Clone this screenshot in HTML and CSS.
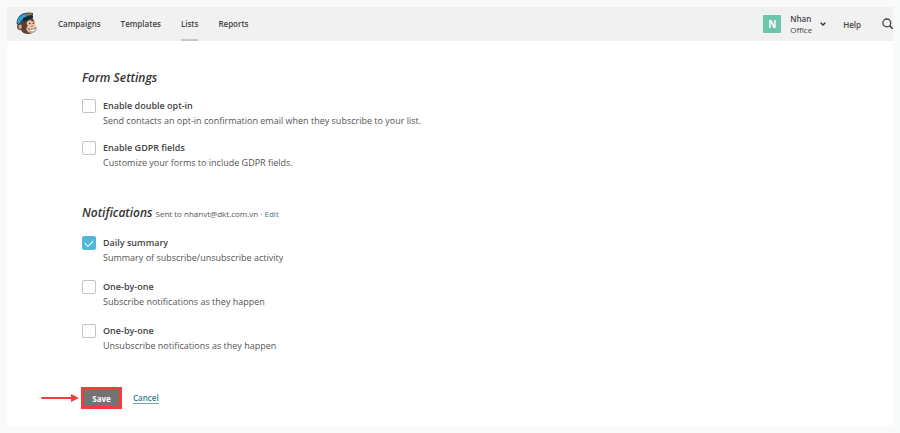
FILE: index.html
```html
<!DOCTYPE html>
<html lang="en">
<head>
<meta charset="utf-8">
<meta name="viewport" content="width=device-width, initial-scale=1">
<title>Form Settings</title>
<link rel="stylesheet" href="styles.css">
</head>
<body>
<div class="page">
  <header class="topbar">
    <a class="logo" href="#" aria-label="Home">
      <svg viewBox="0 0 22 24" width="22" height="24" aria-hidden="true">
        <path d="M4 11C5 7 10 4 15 5C18 7 19 10 19 14C20 19 17 22 12 22C7 22 5 19 4.500 16Z" fill="#5b4038"/>
        <ellipse cx="4" cy="14.500" rx="2.900" ry="3.500" fill="#5b4038"/>
        <ellipse cx="4.100" cy="14.700" rx="1.700" ry="2.300" fill="#d9a584"/>
        <path d="M11 10C13 7.500 15 8 16 9.500C18 8.500 19 10 18.800 12C20.500 15 21.500 17 19.500 19.500C17 22 12 21.500 10.500 18C9.800 16 11.500 14.500 12 13.500C10.600 12.500 10.400 11 11 10Z" fill="#ecc3a3"/>
        <path d="M12 16.500C14.500 18 18 17.600 20 15.500C20 18.500 18.500 20 16 20C14 20 12.500 18.500 12 16.500Z" fill="#fff" stroke="#684437" stroke-width=".6"/>
        <circle cx="13.700" cy="11.500" r=".8" fill="#3a2925"/>
        <circle cx="17.200" cy="11.300" r=".7" fill="#3a2925"/>
        <path d="M15 14h2" stroke="#684437" stroke-width=".7"/>
        <path d="M.8 12C0 7.500 3.500 2.500 8 1.300C11 .2 14.500 .3 17 1L16.500 6C11 5.500 6 7.500 3 13Z" fill="#263846"/>
        <path d="M1.200 10.500C1.500 6 5 2.800 9 1.800L12 4C8 5.500 5.500 8 3 12Z" fill="#27a3d5"/>
        <path d="M9.500 1.500C12 .7 14 .8 16 1.300L15.500 3L11 4Z" fill="#85734f"/>
        <path d="M7 6.500C10 4 14 3.300 17 4.200L17 6C14 6.500 11 8 9 9.500C7.500 9.500 6.500 8.500 7 6.500Z" fill="#1d2731"/>
      </svg>
    </a>
    <nav class="menu" aria-label="Main">
      <a href="#">Campaigns</a>
      <a href="#">Templates</a>
      <a href="#" class="active" aria-current="page">Lists</a>
      <a href="#">Reports</a>
    </nav>
    <div class="tools">
      <button class="account" type="button">
        <span class="avatar">N</span>
        <span class="who"><span class="name">Nhan</span><span>Office</span></span>
        <svg class="chevron" viewBox="0 0 6 4" width="6" height="4" aria-hidden="true"><path d="M.7 .7L3 3L5.300 .7" fill="none" stroke="#333" stroke-width="1.400"/></svg>
      </button>
      <a class="help" href="#">Help</a>
      <button class="search" type="button" aria-label="Search">
        <svg viewBox="0 0 11 12" width="11" height="12" aria-hidden="true"><circle cx="4.800" cy="4.900" r="3.900" fill="none" stroke="#444" stroke-width="1.300"/><path d="M7.500 7.600L10.600 10.800" stroke="#444" stroke-width="1.600"/></svg>
      </button>
    </div>
  </header>
  <main>
    <form class="settings">
      <section>
        <h2>Form Settings</h2>
        <div class="options compact">
          <div class="option">
            <input type="checkbox" id="optin">
            <div><label for="optin">Enable double opt-in</label><p>Send contacts an opt-in confirmation email when they subscribe to your list.</p></div>
          </div>
          <div class="option">
            <input type="checkbox" id="gdpr">
            <div><label for="gdpr">Enable GDPR fields</label><p>Customize your forms to include GDPR fields.</p></div>
          </div>
        </div>
      </section>
      <section>
        <div class="heading"><h2>Notifications</h2><span class="sent">Sent to nhanvt@dkt.com.vn · <a href="#">Edit</a></span></div>
        <div class="options">
          <div class="option">
            <input type="checkbox" id="daily" checked>
            <div><label for="daily">Daily summary</label><p>Summary of subscribe/unsubscribe activity</p></div>
          </div>
          <div class="option">
            <input type="checkbox" id="sub">
            <div><label for="sub">One-by-one</label><p>Subscribe notifications as they happen</p></div>
          </div>
          <div class="option">
            <input type="checkbox" id="unsub">
            <div><label for="unsub">One-by-one</label><p>Unsubscribe notifications as they happen</p></div>
          </div>
        </div>
      </section>
      <div class="actions">
        <svg class="pointer" viewBox="0 0 38 8" width="38" height="8" aria-hidden="true"><path d="M1 4H32" stroke="#f53b3b" stroke-width="2" stroke-linecap="round"/><path d="M30 0L38 4L30 8Z" fill="#f53b3b"/></svg>
        <button class="save" type="button">Save</button>
        <a class="cancel" href="#">Cancel</a>
      </div>
    </form>
  </main>
</div>
</body>
</html>
```
FILE: styles.css
```css
* {
  box-sizing: border-box;
}

body {
  margin: 0;
  padding: 7px;
  background: #f9fbfa;
  color: #555;
  font: 9px/15px "Open Sans", sans-serif;
}

h2,
p {
  margin: 0;
}

button {
  padding: 0;
  border: 0;
  background: none;
  color: inherit;
  font: inherit;
}

svg {
  display: block;
}

.page {
  background: #fff;
}

.topbar {
  display: flex;
  align-items: center;
  height: 34px;
  padding-left: 9px;
  background: #f1f1f1;
  color: #444;
  font-size: 8px;
  font-weight: 600;
}

.topbar a {
  color: inherit;
  text-decoration: none;
}

.menu {
  display: flex;
  align-self: stretch;
  gap: 20px;
  margin-left: 20px;
}

.menu a {
  line-height: 34px;
}

.menu .active {
  box-shadow: inset 0 -2px #c8c8c8;
}

.tools {
  display: flex;
  align-items: center;
  gap: 17px;
  margin-left: auto;
}

.account {
  display: flex;
  align-items: center;
  text-align: left;
}

.avatar {
  width: 18px;
  height: 18px;
  margin-right: 9px;
  border-radius: 1px;
  background: #6dc5ab;
  color: #fff;
  font-size: 10px;
  font-weight: 700;
  line-height: 18px;
  text-align: center;
}

.who {
  font-weight: 400;
  line-height: 11px;
}

.who span {
  display: block;
}

.who .name {
  font-weight: 600;
}

.chevron {
  margin-left: 8px;
}

.search {
  margin-left: 4px;
}

.settings {
  padding: 28px 75px 17px;
}

section {
  margin-bottom: 34px;
}

h2 {
  color: #333;
  font-size: 12px;
  font-style: italic;
  font-weight: 600;
  line-height: 18px;
}

.heading {
  display: flex;
  align-items: baseline;
  gap: 3px;
}

.sent {
  font-size: 8px;
}

.sent a {
  color: #397d8c;
  text-decoration: none;
}

.options {
  display: grid;
  gap: 14px;
  margin-top: 13px;
}

.compact {
  gap: 12px;
  margin-top: 11px;
}

.option {
  display: flex;
  align-items: flex-start;
  gap: 7px;
}

.option label {
  display: block;
  color: #444;
  font-weight: 600;
}

.option input {
  flex: none;
  width: 14px;
  height: 14px;
  margin: 1px 0 0;
  border: 1px solid #c4c4c4;
  border-radius: 2px;
  background: #fff;
  appearance: none;
}

.option input:checked {
  display: grid;
  place-items: center;
  border-color: #52b8d6;
  background: #52b8d6;
}

.option input:checked::before {
  content: "";
  width: 7px;
  height: 4px;
  border: solid #fff;
  border-width: 0 0 1px 1px;
  transform: translateY(-1px) rotate(-45deg);
}

.actions {
  position: relative;
  display: flex;
  align-items: center;
  gap: 11px;
}

.pointer {
  position: absolute;
  top: 7px;
  left: -41px;
}

.save {
  width: 41px;
  height: 22px;
  margin-left: -1px;
  border: 3px solid #f53b3b;
  background: #737373;
  color: #fff;
  font-size: 8px;
  font-weight: 700;
}

.cancel {
  border-bottom: 1px solid #75a8b3;
  color: #397d8c;
  font-size: 8px;
  font-weight: 600;
  line-height: 10px;
  text-decoration: none;
}
```
